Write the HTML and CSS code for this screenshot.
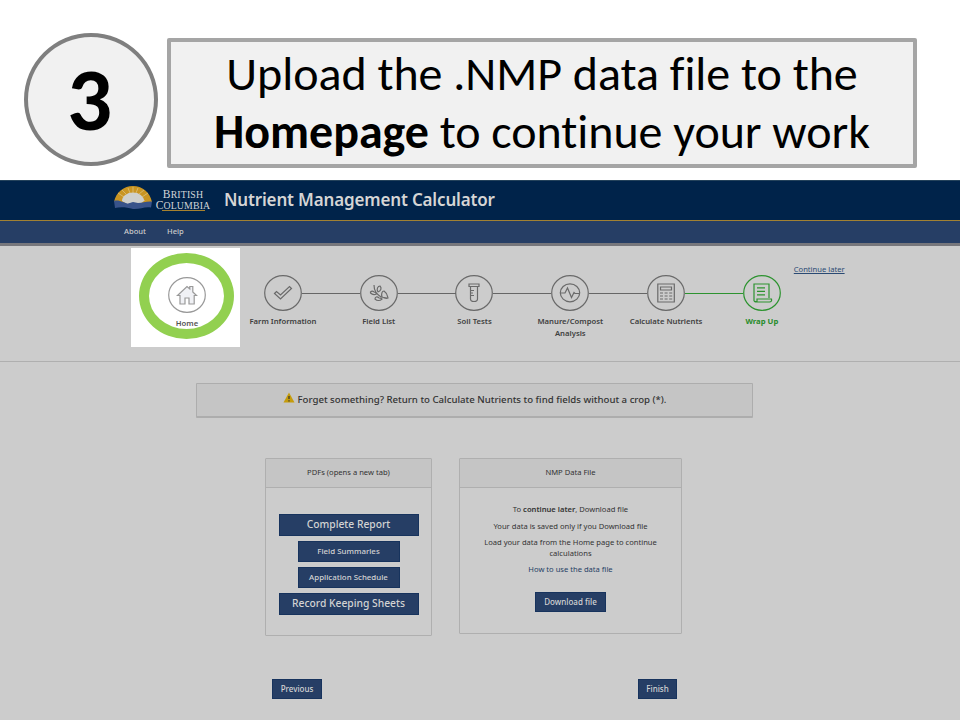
FILE: index.html
```html
<!DOCTYPE html>
<html lang="en">
<head>
<meta charset="utf-8">
<title>Nutrient Management Calculator</title>
<link rel="stylesheet" href="styles.css">
</head>
<body>
<header class="lesson">
  <div class="number">3</div>
  <h1 class="instruction"><span class="line-one">Upload the .NMP data file to the</span><span class="line-two"><b>Homepage</b> to continue your work</span></h1>
</header>
<div class="app">
  <div class="brand">
    <svg class="sun" viewBox="0 0 38 24" width="38" height="24">
      <path d="M0 16C2 6 10 0 19 0s17 6 19 16l-9 1-10 2-10-2z" fill="#c99522"/>
      <path d="M8 15a11 8.500 0 0 1 22 0l-4 3H13z" fill="#cfd0cc"/>
      <path d="M10 11 4 7M12 8 8 4M16 7l-2-5M19 7V1M22 7l2-5M25 8l5-4M28 11l6-4" stroke="#dcc68a" stroke-width=".7"/>
      <path d="M0 15c3-1 6 0 9 1l5 1.500 5-1.500 5 1c5 0 8-2 14-1.500l-1 6c-7-1-11 2-18 1.500C12 21 6 21 1 22z" fill="#38538a"/>
      <path d="M8 14.500l5 3 3-1 3-2.500 3 1.500 4 .5 5-1.500-2-1.500H10z" fill="#cfd0cc"/>
    </svg>
    <div class="province"><span>B<small>RITISH</small></span><span class="col">C<small>OLUMBIA</small></span></div>
    <div class="title">Nutrient Management Calculator</div>
  </div>
  <nav class="menu"><a class="about">About</a><a>Help</a></nav>
  <section class="progress">
    <div class="step home">
      <svg width="38" height="36" viewBox="0 0 38 36"><ellipse cx="19" cy="18" rx="18.300" ry="17.300"/><path class="house" d="M9.500 18.500 19 9.500l2.800 2.500V9.500h3v5.500L28.500 18.500h-2.300V27H21v-6h-4v6h-5v-8.500z"/></svg>
      <span>Home</span>
    </div>
    <div class="step">
      <svg width="38" height="36" viewBox="0 0 38 36"><ellipse cx="19" cy="18" rx="18.300" ry="17.300"/><path d="m10.500 18.500 2-2 4 3.500 9-8.500 2 2L16.500 24z"/></svg>
      <span>Farm Information</span>
    </div>
    <div class="step linked">
      <svg width="38" height="36" viewBox="0 0 38 36"><ellipse cx="19" cy="18" rx="18.300" ry="17.300"/><path d="M14 10c0 5 2 9 7 12l6 1M14 17c-2-2-4 0-3.500 1 2 2 4 2 6 1-1-2-2-2-2.500-2M18 17c-2-3 0-6 2-6 2 2 1 5-2 6M19 23c-2-2-4-1-4 1 2 2 5 2 7 0-1-1-2-1-3-1M22 22c-1-3 0-6 2-6 3 2 3 4 4 7-2 1-4 0-6-1"/></svg>
      <span>Field List</span>
    </div>
    <div class="step linked">
      <svg width="38" height="36" viewBox="0 0 38 36"><ellipse cx="19" cy="18" rx="18.300" ry="17.300"/><path d="M14 9h10v2.500H14zM15.500 11.500V24q0 2.500 3.500 2.500t3.500-2.500V11.500M16 15.500h3M16 18h2M16 20.500h3"/></svg>
      <span>Soil Tests</span>
    </div>
    <div class="step linked">
      <svg width="38" height="36" viewBox="0 0 38 36"><ellipse cx="19" cy="18" rx="18.300" ry="17.300"/><ellipse cx="19" cy="17.800" rx="9.700" ry="9"/><path d="M9.500 18H14l2.500-5 4 9.500 2.500-5 1 1h4.500"/></svg>
      <span>Manure/Compost Analysis</span>
    </div>
    <div class="step linked">
      <svg width="38" height="36" viewBox="0 0 38 36"><ellipse cx="19" cy="18" rx="18.300" ry="17.300"/><path d="M10.800 9h16.500v18H10.800zM13.500 12h11v3h-11z"/><path d="M13 18h12.500M13 21h12.500M13 24h12.500" stroke-dasharray="3 1.600"/></svg>
      <span>Calculate Nutrients</span>
    </div>
    <div class="step linked current">
      <svg width="38" height="36" viewBox="0 0 38 36"><ellipse cx="19" cy="18" rx="18.300" ry="17.300"/><path d="M11 26V9h15v14M14 12.800h8M14 16.300h8M14 19.800h8M11 26q1 1 3 .5V24h14.500q.5 3-2 3H12"/></svg>
      <span>Wrap Up</span>
    </div>
    <a class="later">Continue later</a>
  </section>
  <main>
    <div class="notice">
      <svg width="12" height="11" viewBox="0 0 12 11"><path d="M6 .5 11.500 10.500H.5z" fill="#c59c0c"/><path d="M6 4v3M6 8.300v1.200" stroke="#333" stroke-width="1.200"/></svg>
      <span>Forget something? Return to Calculate Nutrients to find fields without a crop (*).</span>
    </div>
    <div class="panels">
      <section class="panel pdfs">
        <h2>PDFs (opens a new tab)</h2>
        <div class="stack">
          <button class="large">Complete Report</button>
          <button class="medium">Field Summaries</button>
          <button class="medium">Application Schedule</button>
          <button class="large">Record Keeping Sheets</button>
        </div>
      </section>
      <section class="panel data">
        <h2>NMP Data File</h2>
        <div class="copy">
          <p>To <b>continue later</b>, Download file</p>
          <p>Your data is saved only if you Download file</p>
          <p>Load your data from the Home page to continue<br>calculations</p>
          <p class="link">How to use the data file</p>
          <button class="download">Download file</button>
        </div>
      </section>
    </div>
    <div class="pager"><button class="previous">Previous</button><button class="finish">Finish</button></div>
  </main>
</div>
</body>
</html>
```
FILE: styles.css
```css
*, *::before { box-sizing: border-box; }
body { margin: 0; width: 960px; height: 720px; overflow: hidden; background: #fff; font-family: "Noto Sans", sans-serif; color: #333; }
.lesson { height: 180px; display: flex; align-items: flex-start; padding: 33px 0 0 24px; }
.number { width: 134px; height: 133px; border: 4px solid #7f7f7f; border-radius: 50%; background: #f1f1f1; color: #000; font: bold 89px/125px Carlito, "Open Sans", sans-serif; text-align: center; text-indent: -3px; }
.instruction { width: 750px; height: 130px; margin: 5px 0 0 9px; padding-top: 3px; border: 4px solid #a5a5a5; border-radius: 2px; background: #f1f1f1; color: #000; font: 400 48px/58px Carlito, Lato, sans-serif; text-align: center; font-variant-ligatures: none; letter-spacing: -.04px; }
.instruction span { display: block; white-space: nowrap; }
.app { height: 540px; background: #ccc; }
.brand { height: 40px; display: flex; background: #00234a; border-top: 1px solid #24425b; padding: 5px 0 0 114px; }
.province { width: 58px; margin-left: 2px; padding-top: 3px; font: 11.500px/10px "Liberation Serif", serif; color: #d2d5d8; text-align: center; }
.province span { display: block; white-space: nowrap; letter-spacing: .15px; }
.province .col { height: 11px; background: linear-gradient(#a6812e, #a6812e) 8px 100% / 43px 1px no-repeat; }
.province small { font-size: 9.800px; }
.title { margin-left: 12px; font-size: 17px; line-height: 28px; font-weight: 600; letter-spacing: -.16px; color: #d5d5d5; white-space: nowrap; }
.menu { height: 26px; border-top: 1px solid #a28132; border-bottom: 3px solid #77777c; background: #263e65; padding: 4px 0 0 124px; display: flex; gap: 21px; font-size: 7.6px; line-height: 12px; font-weight: 500; color: #ccc; }
.progress { height: 116px; border-bottom: 1px solid #afafaf; display: flex; padding-left: 131px; }
.step { position: relative; width: 95.8px; flex: none; padding-top: 29px; display: flex; flex-direction: column; align-items: center; color: #404040; font-size: 7.7px; line-height: 12px; font-weight: 600; text-align: center; }
.step svg { display: block; flex: none; fill: none; stroke: #6a6a6a; stroke-width: 1.200; }
.step span { margin-top: 4px; }
.step.linked::before { content: ""; position: absolute; left: -29px; top: 47px; width: 58px; height: 1px; background: #666; }
.step.home { width: 109px; height: 99px; margin: 2px -5px 0 0; background: #fff; padding: 29px 0 0 3px; color: #555; }
.step.home::before { content: ""; position: absolute; z-index: 1; left: 8px; top: 5px; width: 95px; height: 86px; border: 10px solid #92d050; border-radius: 50%; }
.step.home svg { stroke: #999; }
.house { fill: #f0f1f5; }
.step.current { color: #278b2a; font-weight: 700; }
.step.current svg { stroke: #2c932f; }
.step.linked.current::before { background: #2c932f; }
.later { margin: 17px 0 0 -16px; font-size: 7.6px; line-height: 12px; color: #2a4a73; text-decoration: underline; white-space: nowrap; }
main { padding: 21px 0 0 196px; }
.notice { width: 557px; height: 35px; padding-bottom: 2px; background: #c5c5c5; border: 1px solid #adadad; border-bottom-width: 2px; border-radius: 1px; display: flex; align-items: center; justify-content: center; gap: 3px; font-size: 9.65px; font-weight: 500; white-space: nowrap; }
.notice svg { margin-top: -4px; }
.panels { display: flex; align-items: flex-start; gap: 27px; padding: 40px 0 0 69px; }
.panel { border: 1px solid #afafaf; border-radius: 1px; }
.panel h2 { margin: 0; height: 29px; border-bottom: 1px solid #afafaf; background: #c5c5c5; font-size: 7.6px; line-height: 26px; font-weight: 400; text-align: center; }
.pdfs { width: 167px; height: 178px; }
.data { width: 223px; height: 176px; }
.stack { display: flex; flex-direction: column; align-items: center; padding-top: 26px; gap: 5px; }
button { display: block; padding: 0; border: 1px solid #17335d; background: #263e65; color: #d3d3d3; font-family: inherit; font-weight: 500; white-space: nowrap; }
.large { width: 140px; height: 22px; padding-bottom: 2px; font-size: 10.300px; font-weight: 500; }
.medium { width: 102px; height: 21px; padding-bottom: 1px; font-size: 7.9px; }
.copy { padding-top: 16px; text-align: center; font-size: 7.6px; line-height: 10.500px; white-space: nowrap; }
.copy p { margin: 0 0 6px; }
.copy b { font-weight: 600; }
.copy .link { color: #263e65; }
.download { width: 71px; height: 20px; padding-bottom: 1px; margin: 17px auto 0; font-size: 8px; }
.pager { display: flex; padding: 43px 0 0 76px; }
.previous { width: 50px; height: 20px; padding-bottom: 2px; font-size: 8px; }
.finish { width: 39px; height: 20px; padding-bottom: 2px; margin-left: 316px; font-size: 8px; }
```
